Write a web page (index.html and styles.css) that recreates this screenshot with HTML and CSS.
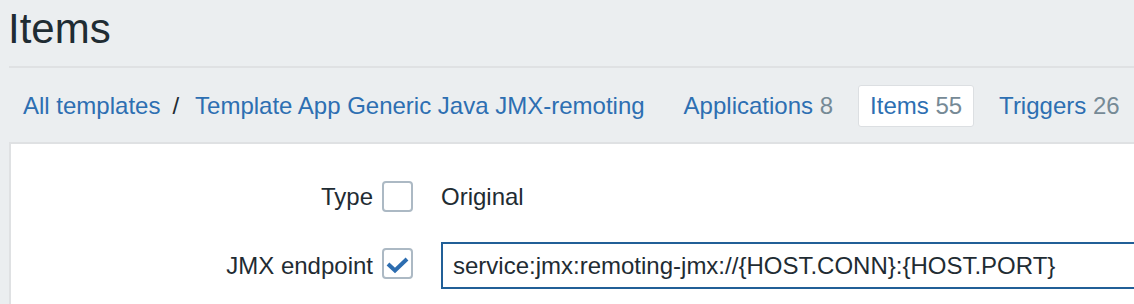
FILE: index.html
```html
<!DOCTYPE html>
<html>
<head>
<meta charset="utf-8">
<link rel="stylesheet" href="styles.css">
</head>
<body>
<header class="header">
  <h1 class="title">Items</h1>
</header>
<div class="rule"></div>
<nav class="nav">
  <div class="crumbs">
    <a class="link">All templates</a>
    <span class="sep">/</span>
    <a class="link">Template App Generic Java JMX-remoting</a>
  </div>
  <div class="tabs">
    <a class="tab"><span class="link">Applications</span> <span class="count">8</span></a>
    <a class="tab active"><span class="link">Items</span> <span class="count">55</span></a>
    <a class="tab"><span class="link">Triggers</span> <span class="count">26</span></a>
  </div>
</nav>
<main class="panel">
  <div class="form">
    <div class="row row-type">
      <label class="label">Type</label>
      <span class="check"></span>
      <span class="value">Original</span>
    </div>
    <div class="row row-jmx">
      <label class="label">JMX endpoint</label>
      <span class="check checked">
        <svg width="31" height="31" viewBox="0 0 31 31"><path d="M6 16 L13 22.5 L25 11" fill="none" stroke="#2d6db0" stroke-width="4"/></svg>
      </span>
      <div class="input">service:jmx:remoting-jmx://{HOST.CONN}:{HOST.PORT}</div>
    </div>
  </div>
</main>
</body>
</html>
```

FILE: styles.css
```css
html, body {
  margin: 0;
  padding: 0;
  background: #ebeef0;
  font-family: "Liberation Sans", Arial, sans-serif;
  color: #1f2c33;
  overflow: hidden;
  height: 304px;
}
.header {
  height: 66px;
  padding-left: 8px;
  box-sizing: border-box;
  padding-top: 8px;
}
.title {
  margin: 0;
  font-size: 42px;
  line-height: 42px;
  font-weight: normal;
  color: #1f2c33;
}
.rule {
  height: 2px;
  margin-left: 9px;
  background: #dfe1e3;
}
.nav {
  display: flex;
  align-items: center;
  height: 74px;
  padding-left: 23px;
  box-sizing: border-box;
  padding-top: 2px;
  font-size: 24px;
}
.crumbs {
  display: flex;
  align-items: center;
}
.link {
  color: #2d6fb2;
}
.sep {
  color: #1f2c33;
  margin-left: 12px;
  margin-right: 16px;
}
.tabs {
  display: flex;
  align-items: center;
  gap: 13px;
  margin-left: 27px;
}
.tab {
  display: block;
  height: 42px;
  box-sizing: border-box;
  line-height: 39px;
  padding: 0 11px;
  border: 1px solid transparent;
  border-radius: 3px;
}
.tab.active {
  background: #ffffff;
  border-color: #dcdfe2;
}
.count {
  color: #768a96;
}
.panel {
  margin-left: 9px;
  border-top: 2px solid #dfe1e3;
  border-left: 2px solid #dfe1e3;
  background: #ffffff;
  height: 160px;
  overflow: hidden;
}
.form {
  padding-top: 37px;
  display: flex;
  flex-direction: column;
  gap: 30px;
  font-size: 24px;
}
.row {
  display: flex;
  align-items: center;
}
.label {
  width: 362px;
  text-align: right;
  flex: none;
}
.check {
  flex: none;
  width: 31px;
  height: 31px;
  box-sizing: border-box;
  border: 2px solid #acb9c4;
  border-radius: 4px;
  margin-left: 9px;
  margin-right: 28px;
  position: relative;
}
.check svg {
  position: absolute;
  left: -2px;
  top: -2px;
}
.row-jmx .check {
  align-self: flex-start;
  margin-top: 6px;
}
.value {
  line-height: 27px;
}
.input {
  flex: none;
  width: 760px;
  height: 47px;
  box-sizing: border-box;
  border: 2px solid #215f97;
  padding-left: 10px;
  line-height: 43px;
  color: #1f2c33;
}
```
